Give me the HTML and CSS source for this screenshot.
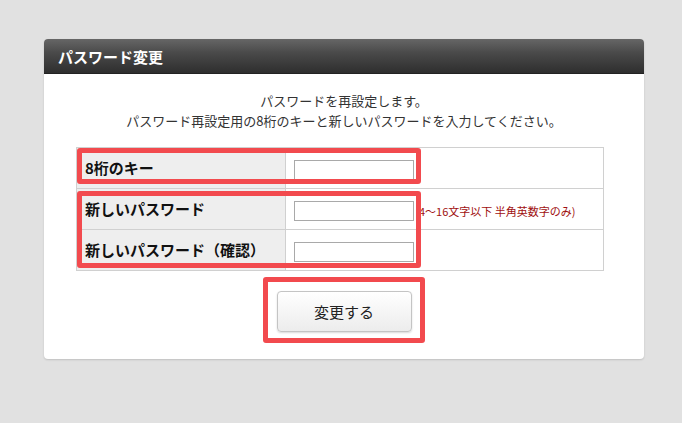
FILE: index.html
```html
<!DOCTYPE html>
<html lang="ja">
<head>
<meta charset="utf-8">
<title>パスワード変更</title>
<link rel="stylesheet" href="styles.css">
</head>
<body>
<div class="panel">
  <div class="panel-head">パスワード変更</div>
  <div class="panel-body">
    <p class="lead">パスワードを再設定します。<br>パスワード再設定用の8桁のキーと新しいパスワードを入力してください。</p>
    <table class="form">
      <tr>
        <th>8桁のキー</th>
        <td><input type="text" class="field"></td>
      </tr>
      <tr>
        <th>新しいパスワード</th>
        <td><input type="password" class="field"><span class="note">4～16文字以下 半角英数字のみ)</span></td>
      </tr>
      <tr>
        <th>新しいパスワード（確認）</th>
        <td><input type="password" class="field"></td>
      </tr>
    </table>
    <div class="actions">
      <button type="button" class="btn">変更する</button>
    </div>
  </div>
  <div class="mark mark-key"></div>
  <div class="mark mark-pass"></div>
  <div class="mark mark-btn"></div>
</div>
</body>
</html>
```
FILE: styles.css
```css
html, body {
  margin: 0;
  padding: 0;
}
body {
  background: #e1e1e1;
  font-family: "Noto Sans CJK JP", "Noto Sans", sans-serif;
  color: #333;
  width: 682px;
  height: 423px;
  overflow: hidden;
}
.panel {
  position: relative;
  margin: 39px 0 0 44px;
  width: 600px;
  background: #fff;
  border-radius: 4px;
  box-shadow: 0 1px 2px rgba(0,0,0,0.15);
}
.panel-head {
  height: 35px;
  box-sizing: border-box;
  padding: 0 14px;
  line-height: 35px;
  color: #fff;
  font-weight: bold;
  font-size: 15px;
  border-radius: 4px 4px 0 0;
  background: linear-gradient(#666 0%, #4a4a4a 40%, #2e2e2e 100%);
  border-bottom: 1px solid #222;
}
.panel-body {
  padding: 17px 0 27px 0;
}
.lead {
  margin: 0;
  text-align: center;
  font-size: 13px;
  line-height: 20px;
  color: #333;
}
.form {
  margin: 16px 0 0 32px;
  width: 528px;
  border-collapse: collapse;
}
.form th, .form td {
  border: 1px solid #d0d0d0;
  height: 41px;
  padding: 0;
  box-sizing: border-box;
}
.form th {
  width: 209px;
  background: #eeeeee;
  text-align: left;
  padding-left: 8px;
  font-size: 15px;
  font-weight: bold;
  color: #111;
  line-height: 20px;
}
.form td {
  padding-left: 8px;
  white-space: nowrap;
}
.field {
  width: 120px;
  height: 20px;
  box-sizing: border-box;
  border: 1px solid #a9a9a9;
  margin: 0;
  padding: 0 3px;
  vertical-align: middle;
  font-size: 12px;
}
.note {
  display: inline-block;
  vertical-align: middle;
  margin-left: 5px;
  font-size: 11px;
  color: #a01010;
  line-height: 14px;
}
.actions {
  margin-top: 20px;
  display: flex;
  justify-content: center;
}
.btn {
  width: 135px;
  height: 41px;
  box-sizing: border-box;
  border: 1px solid #c4c4c4;
  border-radius: 4px;
  background: linear-gradient(#ffffff, #ececec);
  box-shadow: 0 1px 2px rgba(0,0,0,0.15);
  font-family: "Noto Sans CJK JP", "Noto Sans", sans-serif;
  font-size: 15px;
  color: #222;
  padding: 0;
}
.mark {
  position: absolute;
  border: 5px solid #f24a4e;
  border-radius: 3px;
  box-sizing: border-box;
}
.mark-key {
  left: 33px;
  top: 109px;
  width: 344px;
  height: 36px;
}
.mark-pass {
  left: 33px;
  top: 152px;
  width: 344px;
  height: 77px;
}
.mark-btn {
  left: 219px;
  top: 238px;
  width: 162px;
  height: 66px;
}
```
